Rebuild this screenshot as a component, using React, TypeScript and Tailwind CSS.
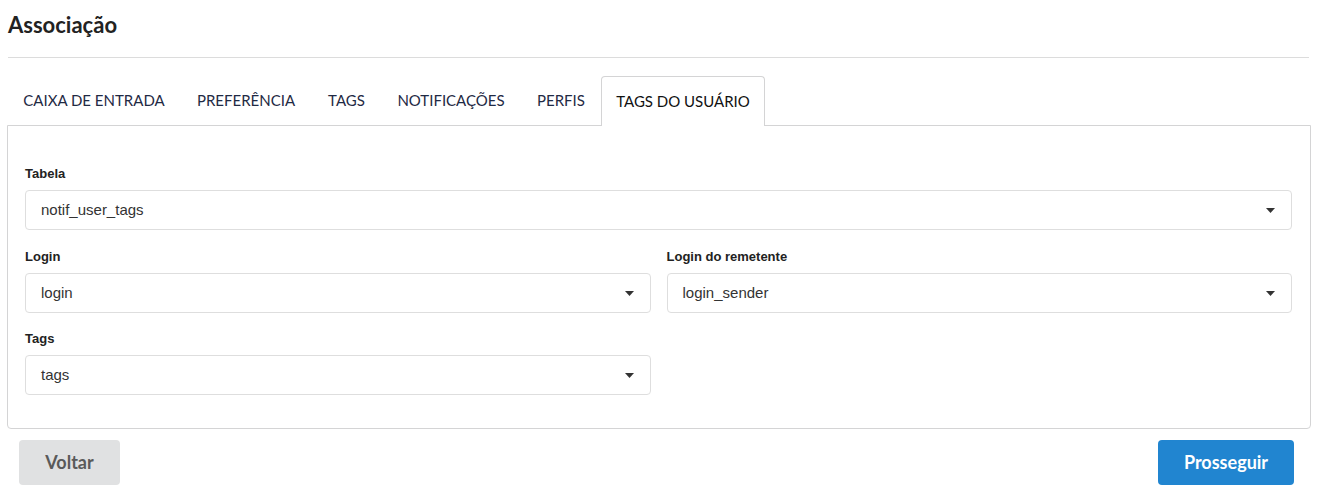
import React, { useState } from "react";

const TABS = [
  { label: "CAIXA DE ENTRADA", w: "w-[172px]" },
  { label: "PREFERÊNCIA", w: "w-[132px]" },
  { label: "TAGS", w: "w-[69px]" },
  { label: "NOTIFICAÇÕES", w: "w-[140px]" },
  { label: "PERFIS", w: "w-[80px]" },
  { label: "TAGS DO USUÁRIO", w: "w-[164px]" },
];

const Caret = () => (
  <svg width="9" height="5" viewBox="0 0 9 5" className="shrink-0">
    <path d="M0 0 H9 L4.5 5 Z" fill="#333" />
  </svg>
);

const SelectField: React.FC<{ label: string; value: string }> = ({ label, value }) => (
  <div className="flex flex-col">
    <label className="text-[13px] font-bold text-[#222] leading-4 mb-2 font-['Liberation_Sans',Arial,sans-serif]">
      {label}
    </label>
    <div className="h-10 flex items-center justify-between pl-[15px] pr-[16px] border border-[#dedede] rounded-[4px] bg-white">
      <span className="text-[15px] text-[#333] font-['Liberation_Sans',Arial,sans-serif]">{value}</span>
      <Caret />
    </div>
  </div>
);

export default function App() {
  const [active, setActive] = useState(5);

  return (
    <div className="w-[1319px] h-[497px] bg-white font-['Lato',sans-serif] text-[#1f2733]">
      <div className="px-[8px] pt-[11px]">
        <h1 className="text-[22px] font-bold leading-7 text-[#222]">Associação</h1>
        <div className="mt-[18px] mr-[2px] border-t border-[#dcdcdc]" />
      </div>

      {/* abas */}
      <div className="flex items-end px-[8px] pt-[18px] h-[67px]">
        {TABS.map((t, i) => (
          <button
            key={t.label}
            onClick={() => setActive(i)}
            className={`${t.w} flex items-center justify-center text-[15px] whitespace-nowrap ${
              i === active
                ? "h-[50px] border border-b-0 border-[#d4d4d5] rounded-t-[4px] bg-white text-[#111] relative z-10 -mb-px"
                : "h-[49px] text-[#1f2a44]"
            }`}
          >
            {t.label}
          </button>
        ))}
      </div>

      {/* painel */}
      <div className="mx-[7px] w-[1304px] border border-[#d4d4d5] rounded-b-[4px] pt-[40px] pb-[33px] pl-[17px] pr-[18px] flex flex-col">
        <SelectField label="Tabela" value="notif_user_tags" />
        <div className="grid grid-cols-2 gap-4 mt-[19px]">
          <SelectField label="Login" value="login" />
          <SelectField label="Login do remetente" value="login_sender" />
        </div>
        <div className="grid grid-cols-2 gap-4 mt-[18px]">
          <SelectField label="Tags" value="tags" />
          <div />
        </div>
      </div>

      {/* ações */}
      <div className="flex justify-between pl-[19px] pr-[25px] pt-[11px]">
        <button className="w-[101px] h-[45px] rounded-[4px] bg-[#e0e1e2] text-[#5a5a5a] text-[18px] font-bold">
          Voltar
        </button>
        <button className="w-[136px] h-[45px] rounded-[4px] bg-[#2185d0] text-white text-[18px] font-bold">
          Prosseguir
        </button>
      </div>
    </div>
  );
}
